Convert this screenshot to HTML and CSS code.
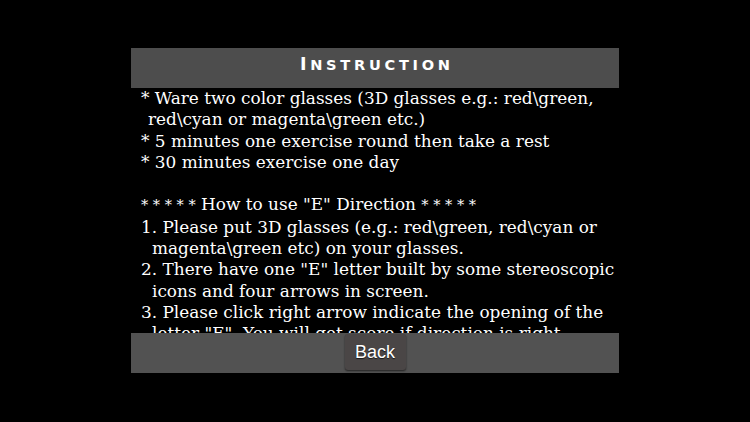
FILE: index.html
```html
<!DOCTYPE html>
<html>
<head>
<meta charset="utf-8">
<link rel="stylesheet" href="styles.css">
</head>
<body>
<div class="panel">
  <div class="header"><span class="title"><span class="cap">I</span>NSTRUCTION</span></div>
  <div class="content">
    <p class="line">* Ware two color glasses (3D glasses e.g.: red\green,</p>
    <p class="line cont1">red\cyan or magenta\green etc.)</p>
    <p class="line">* 5 minutes one exercise round then take a rest</p>
    <p class="line">* 30 minutes exercise one day</p>
    <p class="line">&nbsp;</p>
    <p class="line"><span class="stars">* * * * *</span> How to use "E" Direction <span class="stars">* * * * *</span></p>
    <p class="line">1. Please put 3D glasses (e.g.: red\green, red\cyan or</p>
    <p class="line cont2">magenta\green etc) on your glasses.</p>
    <p class="line">2. There have one "E" letter built by some stereoscopic</p>
    <p class="line cont2">icons and four arrows in screen.</p>
    <p class="line">3. Please click right arrow indicate the opening of the</p>
    <p class="line cont2">letter "E". You will get score if direction is right.</p>
    <p class="line cont2">Otherwise you will lose score.</p>
  </div>
  <div class="footer">
    <button class="back">Back</button>
  </div>
</div>
</body>
</html>
```
FILE: styles.css
```css
html, body {
  margin: 0;
  padding: 0;
  background: #000;
  width: 750px;
  height: 422px;
  overflow: hidden;
}
.panel {
  width: 488px;
  margin: 48px auto 0;
  display: flex;
  flex-direction: column;
}
.header {
  height: 40px;
  background: #4d4d4d;
  display: flex;
  align-items: flex-start;
  justify-content: center;
  padding-top: 6px;
  box-sizing: border-box;
}
.title {
  font-family: "DejaVu Sans", sans-serif;
  font-weight: bold;
  font-size: 14.6px;
  letter-spacing: 3.7px;
  color: #fff;
  margin-right: -3.7px;
}
.title .cap {
  font-size: 17.5px;
}
.content {
  height: 245px;
  overflow: hidden;
  padding: 0 0 0 10px;
  box-sizing: border-box;
  color: #fff;
  font-family: "DejaVu Serif", serif;
  font-size: 16.9px;
  line-height: 21.3px;
}
.line {
  margin: 0;
  white-space: nowrap;
}
.cont1 { padding-left: 7px; }
.cont2 { padding-left: 11px; }
.stars { font-size: 14.5px; }
.footer {
  height: 40px;
  background: #525252;
  display: flex;
  justify-content: center;
  align-items: flex-start;
  padding-top: 1px;
  box-sizing: border-box;
}
.back {
  width: 61px;
  height: 36px;
  background: #4a4646;
  border: none;
  border-radius: 3px;
  box-shadow: 0 1px 2px rgba(0,0,0,0.6);
  color: #fff;
  font-family: "Liberation Sans", Arial, sans-serif;
  font-size: 18px;
  text-shadow: 0 1px 1px rgba(0,0,0,0.7);
  padding: 0;
}
```
